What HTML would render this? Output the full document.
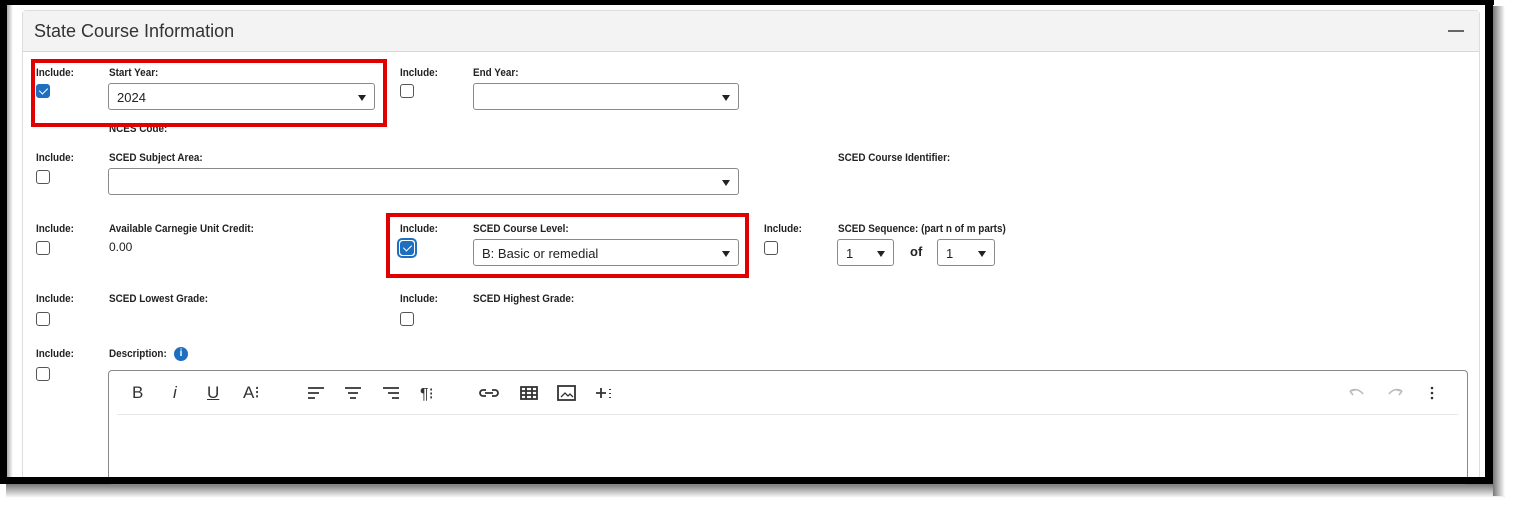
<!DOCTYPE html>
<html><head><meta charset="utf-8"><style>
*{box-sizing:border-box;margin:0;padding:0}
body{width:1514px;height:507px;background:#fff;position:relative;overflow:hidden;font-family:"Liberation Sans",sans-serif;color:#222}
.a{position:absolute}
.lb{position:absolute;font-family:"Liberation Sans",sans-serif;font-weight:bold;font-size:11px;color:#222;white-space:nowrap;transform:scaleX(0.9);transform-origin:0 0}
.cb{position:absolute;width:14px;height:14px;border:1.5px solid #555;border-radius:3px;background:#fff}
.cb.on{background:#1e6fbf;border-color:#1e6fbf}
.cb.on:after{content:"";position:absolute;left:3.5px;top:1px;width:4px;height:7px;border:solid #fff;border-width:0 1.5px 1.5px 0;transform:rotate(45deg)}
.sel{position:absolute;height:27px;border:1px solid #8a8a8a;border-radius:3px;background:#fff;font-size:13px;padding:6px 0 0 8px;color:#222}
.sel:after{content:"";position:absolute;right:8px;top:11px;border-left:4px solid transparent;border-right:4px solid transparent;border-top:6px solid #222}
.red{position:absolute;border:4px solid #e00000}
.ic{position:absolute;top:383px;font-size:17px;color:#333}
</style></head><body>
<div class="a" style="left:6px;top:484px;width:1499px;height:14px;background:linear-gradient(#777,#fff)"></div>
<div class="a" style="left:1493px;top:6px;width:12px;height:490px;background:linear-gradient(90deg,#777,#fff)"></div>

<div class="a" style="left:22px;top:10px;width:1458px;height:467px;border:1px solid #ddd;border-bottom:none;border-radius:4px 4px 0 0"></div>
<div class="a" style="left:23px;top:11px;width:1456px;height:41px;background:#f3f3f3;border-bottom:1px solid #d8d8d8"></div>
<div class="a" style="left:34px;top:21px;font-size:18px;color:#333">State Course Information</div>
<div class="a" style="left:1448px;top:30px;width:16px;height:2px;background:#666"></div>

<div class="lb" style="left:36px;top:67px">Include:</div>
<div class="cb on" style="left:36px;top:84px"></div>
<div class="lb" style="left:109px;top:67px">Start Year:</div>
<div class="sel" style="left:108px;top:83px;width:267px">2024</div>
<div class="lb" style="left:109px;top:123px">NCES Code:</div>
<div class="red" style="left:31px;top:59px;width:356px;height:68px"></div>
<div class="lb" style="left:400px;top:67px">Include:</div>
<div class="cb" style="left:400px;top:84px"></div>
<div class="lb" style="left:473px;top:67px">End Year:</div>
<div class="sel" style="left:473px;top:83px;width:266px"></div>

<div class="lb" style="left:36px;top:152px">Include:</div>
<div class="cb" style="left:36px;top:170px"></div>
<div class="lb" style="left:109px;top:152px">SCED Subject Area:</div>
<div class="sel" style="left:108px;top:168px;width:631px"></div>
<div class="lb" style="left:838px;top:152px">SCED Course Identifier:</div>

<div class="lb" style="left:36px;top:223px">Include:</div>
<div class="cb" style="left:36px;top:241px"></div>
<div class="lb" style="left:109px;top:223px">Available Carnegie Unit Credit:</div>
<div class="a" style="left:109px;top:240px;font-size:12px">0.00</div>
<div class="lb" style="left:400px;top:223px">Include:</div>
<div class="a" style="left:397px;top:238px;width:20px;height:20px;border:2px solid #1e6fbf;border-radius:5px"></div>
<div class="cb on" style="left:400px;top:241px"></div>
<div class="lb" style="left:473px;top:223px">SCED Course Level:</div>
<div class="sel" style="left:473px;top:239px;width:266px">B: Basic or remedial</div>
<div class="red" style="left:386px;top:213px;width:363px;height:65px"></div>
<div class="lb" style="left:764px;top:223px">Include:</div>
<div class="cb" style="left:764px;top:241px"></div>
<div class="lb" style="left:838px;top:223px">SCED Sequence: (part n of m parts)</div>
<div class="sel" style="left:837px;top:239px;width:57px">1</div>
<div class="a" style="left:910px;top:244px;font-weight:bold;font-size:13px">of</div>
<div class="sel" style="left:937px;top:239px;width:58px">1</div>

<div class="lb" style="left:36px;top:293px">Include:</div>
<div class="cb" style="left:36px;top:312px"></div>
<div class="lb" style="left:109px;top:293px">SCED Lowest Grade:</div>
<div class="lb" style="left:400px;top:293px">Include:</div>
<div class="cb" style="left:400px;top:312px"></div>
<div class="lb" style="left:473px;top:293px">SCED Highest Grade:</div>

<div class="lb" style="left:36px;top:348px">Include:</div>
<div class="cb" style="left:36px;top:367px"></div>
<div class="lb" style="left:109px;top:348px">Description:</div>
<div class="a" style="left:174px;top:347px;width:14px;height:14px;border-radius:50%;background:#1e6fbf;color:#fff;font-size:10px;font-weight:bold;text-align:center;line-height:14px">i</div>

<div class="a" style="left:108px;top:370px;width:1360px;height:115px;border:1px solid #888;border-radius:4px"></div>
<div class="a" style="left:117px;top:414px;width:1341px;height:1px;background:#e8e8e8"></div>
<div class="ic" style="left:132px">B</div>
<div class="ic" style="left:173px;font-style:italic">i</div>
<div class="ic" style="left:207px;text-decoration:underline">U</div>
<div class="ic" style="left:243px">A⁝</div>
<svg class="a" style="left:300px;top:380px" width="330" height="26" stroke="#333" stroke-width="1.8" fill="none">
<path d="M8 8h16M8 13h11M8 18h7"/><path d="M45 8h16M48 13h10M50 18h6"/><path d="M83 8h16M88 13h11M92 18h7"/>
<text x="120" y="19" font-size="16" fill="#333" stroke="none" font-family="Liberation Sans">¶⁝</text>
<path d="M186 10h-3a3 3 0 0 0 0 6h3M192 10h3a3 3 0 0 1 0 6h-3M185 13h8"/>
<rect x="221" y="7" width="16" height="12"/><path d="M221 11h16M221 15h16M226 7v12M232 7v12"/>
<rect x="258" y="6" width="17" height="14"/><path d="M261 17l4-4 3 3 2-2 3 3" stroke-width="1.3"/>
<path d="M296 13h10M301 8v10"/><path d="M310 9v1M310 13v1M310 17v1" stroke-width="2"/>
</svg>
<svg class="a" style="left:1345px;top:382px" width="100" height="22" fill="none" stroke="#bbb" stroke-width="1.6">
<path d="M5 9l3 4M5 9l5 -1M5 9c5-3 10-1 13 3"/><path d="M57 9l-3 4M57 9l-5 -1M57 9c-5-3-10-1-13 3"/>
<circle cx="87" cy="6" r="1.3" fill="#333" stroke="none"/><circle cx="87" cy="11" r="1.3" fill="#333" stroke="none"/><circle cx="87" cy="16" r="1.3" fill="#333" stroke="none"/>
</svg>
<div class="a" style="left:0;top:0;width:1494px;height:5px;background:#000"></div>
<div class="a" style="left:0;top:0;width:7px;height:484px;background:#000"></div>
<div class="a" style="left:7px;top:5px;width:6px;height:472px;background:linear-gradient(90deg,#aaa,#fff)"></div>
<div class="a" style="left:1485px;top:0;width:8px;height:484px;background:#000"></div>
<div class="a" style="left:0;top:477px;width:1493px;height:7px;background:#000"></div>
</body></html>
